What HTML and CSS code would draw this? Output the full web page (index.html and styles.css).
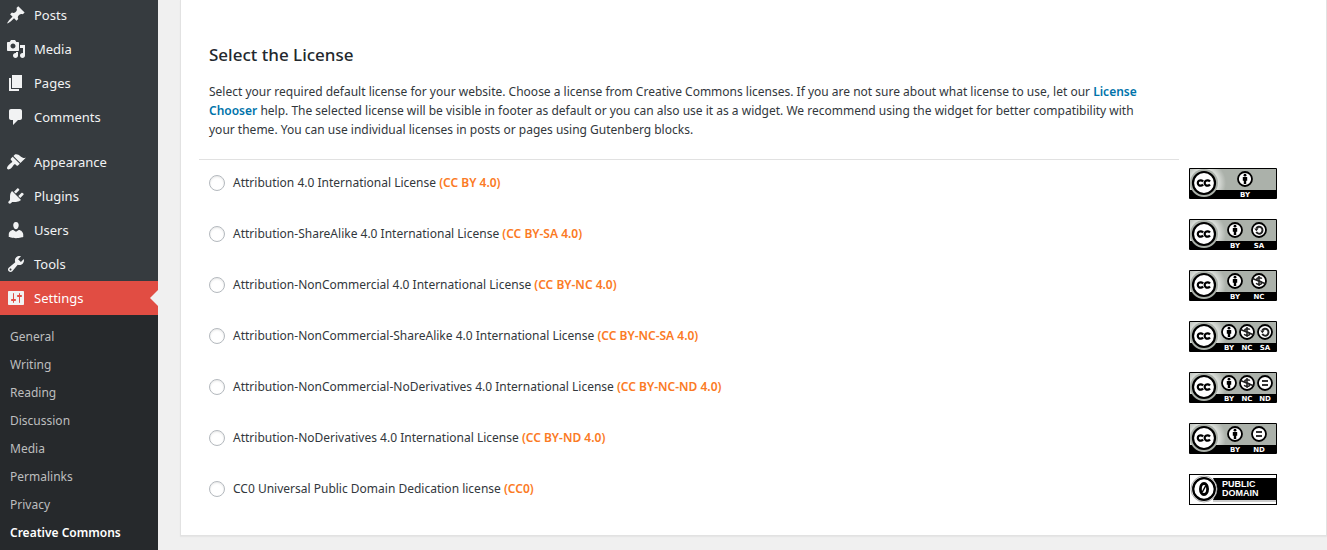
FILE: index.html
```html
<!DOCTYPE html>
<html lang="en">
<head>
<meta charset="utf-8">
<title>Creative Commons Settings</title>
<link rel="stylesheet" href="styles.css">
</head>
<body>
<svg class="sprite" aria-hidden="true">
  <defs>
    <radialGradient id="glow" gradientUnits="userSpaceOnUse" cx="15" cy="15" r="22">
      <stop offset="0.6" stop-color="#e2e5e1"/>
      <stop offset="1" stop-color="#abb1aa"/>
    </radialGradient>
    <symbol id="plate" viewBox="0 0 88 31">
      <rect width="88" height="31" rx="1" fill="#000"/>
      <rect x="1" y="1" width="86" height="21" fill="url(#glow)"/>
      <circle cx="15" cy="15" r="14" fill="#abb1aa"/>
      <circle cx="15" cy="15" r="11" fill="#fff" stroke="#000" stroke-width="2.2"/>
      <g fill="none" stroke="#000" stroke-width="2.2">
        <path d="M14.100 13.500A2.900 2.700 0 1 0 14.100 16.500M21 13.500A2.900 2.700 0 1 0 21 16.500"/>
      </g>
    </symbol>
    <symbol id="by" viewBox="0 0 16 16">
      <circle cx="8" cy="8" r="7" fill="#fff" stroke="#000" stroke-width="1.8"/>
      <circle cx="8" cy="4.200" r="1.400"/>
      <path d="M5.800 6h4.400v3.800H9.200V13H6.800V9.800H5.800z"/>
    </symbol>
    <symbol id="sa" viewBox="0 0 16 16">
      <circle cx="8" cy="8" r="7" fill="#fff" stroke="#000" stroke-width="1.8"/>
      <path d="M5.300 6.500A3.300 3.500 0 1 1 5.300 9.900" fill="none" stroke="#222" stroke-width="2"/>
      <path d="M3.200 6.600h4.400L5.400 9.200z" fill="#222"/>
    </symbol>
    <symbol id="nc" viewBox="0 0 16 16">
      <circle cx="8" cy="8" r="7" fill="#fff" stroke="#000" stroke-width="1.8"/>
      <path d="M10.800 5.700C9.900 4.200 5.700 4.200 5.700 6.300c0 1.900 5 1.500 5 3.500 0 2.200-4.600 2-5.500.3M8 3v10" fill="none" stroke="#222" stroke-width="1.500"/>
      <path d="M1.500 5.500l13 5.200" stroke="#222" stroke-width="1.600"/>
    </symbol>
    <symbol id="nd" viewBox="0 0 16 16">
      <circle cx="8" cy="8" r="7" fill="#fff" stroke="#000" stroke-width="1.8"/>
      <path d="M5 5h6v2H5zM5 9h6v2H5z" fill="#333"/>
    </symbol>
  </defs>
</svg>

<div class="layout">
  <nav class="sidebar" aria-label="Main menu">
    <ul class="menu">
      <li><a class="menu-link" href="#"><svg class="menu-icon" viewBox="0 0 20 20"><path d="M10.440 3.020l1.820-1.820 6.360 6.350-1.830 1.820c-1.050-.68-2.480-.57-3.410.36l-.75.75c-.92.93-1.040 2.350-.35 3.410l-1.830 1.820-2.410-2.410-2.800 2.790c-.42.42-3.380 2.710-3.800 2.290s1.860-3.390 2.280-3.810l2.790-2.790L4.100 9.360l1.830-1.820c1.050.69 2.480.57 3.400-.36l.75-.75c.93-.92 1.050-2.350.36-3.410z"/></svg>Posts</a></li>
      <li><a class="menu-link" href="#"><svg class="menu-icon" viewBox="0 0 20 20"><path d="M13 11V4c0-.55-.45-1-1-1h-1.670L9 1H5L3.670 3H2c-.55 0-1 .45-1 1v7c0 .55.45 1 1 1h10c.55 0 1-.45 1-1zM7 4.500c1.380 0 2.500 1.120 2.500 2.500S8.380 9.500 7 9.500 4.500 8.380 4.500 7 5.620 4.500 7 4.500zM14 6h5v10.500c0 1.380-1.120 2.500-2.500 2.500S14 17.880 14 16.500s1.120-2.500 2.500-2.500c.17 0 .34.02.5.05V9h-3V6zm-4 8.050V13h2v3.500c0 1.380-1.120 2.500-2.500 2.500S7 17.880 7 16.500 8.120 14 9.500 14c.17 0 .34.02.5.05z"/></svg>Media</a></li>
      <li><a class="menu-link" href="#"><svg class="menu-icon" viewBox="0 0 20 20"><path d="M6 15V2h10v13H6zm-1 1h8v2H3V5h2v11z"/></svg>Pages</a></li>
      <li><a class="menu-link" href="#"><svg class="menu-icon" viewBox="0 0 20 20"><path d="M5 2h9c1.100 0 2 .9 2 2v7c0 1.100-.9 2-2 2h-2l-5 5v-5H5c-1.100 0-2-.9-2-2V4c0-1.100.9-2 2-2z"/></svg>Comments</a></li>
    </ul>
    <ul class="menu">
      <li><a class="menu-link" href="#"><svg class="menu-icon" viewBox="0 0 20 20"><path d="M14.480 11.060L7.410 3.990l1.500-1.500c.5-.56 2.300-.47 3.510.32 1.210.8 1.430 1.280 2.910 2.100 1.180.64 2.450 1.260 4.450.85zm-.71.71L6.700 4.700 4.930 6.470c-.39.39-.39 1.020 0 1.410l1.060 1.060c.39.39.39 1.030 0 1.420-.6.6-1.430 1.110-2.210 1.690-.35.26-.7.53-1.010.84C1.430 14.230.4 16.080 1.400 17.070c.99 1 2.840-.03 4.180-1.360.31-.31.58-.66.85-1.020.57-.78 1.080-1.610 1.690-2.210.39-.39 1.020-.39 1.410 0l1.060 1.060c.39.39 1.020.39 1.410 0z"/></svg>Appearance</a></li>
      <li><a class="menu-link" href="#"><svg class="menu-icon" viewBox="0 0 20 20"><path d="M13.110 4.360L9.870 7.600 8 5.730l3.240-3.240c.35-.34 1.050-.2 1.560.32.52.51.66 1.210.31 1.550zm-8 1.770l.91-1.120 9.010 9.010-1.190.84c-.71.71-2.630 1.160-3.820 1.160H6.140L4.900 17.260c-.59.59-1.540.59-2.120 0-.59-.58-.59-1.530 0-2.120l1.240-1.240v-3.880c0-1.130.4-3.190 1.090-3.890zm7.260 3.970l3.240-3.240c.34-.35 1.040-.21 1.550.31.52.51.66 1.210.31 1.550l-3.240 3.250z"/></svg>Plugins</a></li>
      <li><a class="menu-link" href="#"><svg class="menu-icon" viewBox="0 0 20 20"><path d="M10 9.250c-2.270 0-2.730-3.440-2.730-3.440C7 4.020 7.820 2 9.970 2c2.160 0 2.980 2.020 2.710 3.810 0 0-.41 3.440-2.680 3.440zm0 2.570L12.720 10c2.390 0 4.520 2.330 4.520 4.530v2.490s-3.650 1.130-7.240 1.130c-3.650 0-7.240-1.130-7.240-1.130v-2.490c0-2.250 1.940-4.480 4.470-4.480z"/></svg>Users</a></li>
      <li><a class="menu-link" href="#"><svg class="menu-icon" viewBox="0 0 20 20"><path d="M16.680 9.770c-1.340 1.340-3.300 1.670-4.950.99l-5.410 6.520c-.99.99-2.590.99-3.580 0s-.99-2.590 0-3.570l6.520-5.420c-.68-1.650-.35-3.610.99-4.950 1.280-1.280 3.120-1.620 4.720-1.060l-2.890 2.890 2.820 2.820 2.860-2.870c.53 1.580.18 3.390-1.080 4.650zM3.810 16.210c.4.390 1.040.390 1.430 0 .4-.4.4-1.040 0-1.430-.39-.4-1.030-.4-1.430 0-.39.390-.39 1.030 0 1.430z"/></svg>Tools</a></li>
      <li><a class="menu-link current" href="#"><svg class="menu-icon" viewBox="0 0 20 20"><path d="M18 16V4c0-.55-.45-1-1-1H3c-.55 0-1 .45-1 1v12c0 .55.45 1 1 1h14c.55 0 1-.45 1-1zM8 11h1c.55 0 1 .45 1 1s-.45 1-1 1H8v1.500c0 .28-.22.5-.5.5s-.5-.22-.5-.5V13H6c-.55 0-1-.45-1-1s.45-1 1-1h1V5.500c0-.28.22-.5.5-.5s.5.22.5.5V11zm5-2h-1c-.55 0-1-.45-1-1s.45-1 1-1h1V5.500c0-.28.22-.5.5-.5s.5.22.5.5V7h1c.55 0 1 .45 1 1s-.45 1-1 1h-1v5.500c0 .28-.22.5-.5.5s-.5-.22-.5-.5V9z"/></svg>Settings</a>
        <ul class="submenu">
          <li><a href="#">General</a></li>
          <li><a href="#">Writing</a></li>
          <li><a href="#">Reading</a></li>
          <li><a href="#">Discussion</a></li>
          <li><a href="#">Media</a></li>
          <li><a href="#">Permalinks</a></li>
          <li><a href="#">Privacy</a></li>
          <li><a class="active" href="#" aria-current="page">Creative Commons</a></li>
        </ul>
      </li>
    </ul>
  </nav>

  <main class="content">
    <form class="panel">
      <header class="intro">
        <h2>Select the License</h2>
        <p>Select your required default license for your website. Choose a license from Creative Commons licenses. If you are not sure about what license to use, let our <a href="#">License Chooser</a> help. The selected license will be visible in footer as default or you can also use it as a widget. We recommend using the widget for better compatibility with your theme. You can use individual licenses in posts or pages using Gutenberg blocks.</p>
      </header>
      <ul class="licenses">
        <li class="license">
          <label><input type="radio" name="license"><span>Attribution 4.0 International License <b>(CC BY 4.0)</b></span></label>
          <svg class="badge" viewBox="0 0 88 31"><use href="#plate"/><use href="#by" x="48" y="3" width="16" height="16"/><text x="56" y="29">BY</text></svg>
        </li>
        <li class="license">
          <label><input type="radio" name="license"><span>Attribution-ShareAlike 4.0 International License <b>(CC BY-SA 4.0)</b></span></label>
          <svg class="badge" viewBox="0 0 88 31"><use href="#plate"/><use href="#by" x="38" y="3" width="16" height="16"/><use href="#sa" x="62" y="3" width="16" height="16"/><text x="46" y="29">BY</text><text x="70" y="29">SA</text></svg>
        </li>
        <li class="license">
          <label><input type="radio" name="license"><span>Attribution-NonCommercial 4.0 International License <b>(CC BY-NC 4.0)</b></span></label>
          <svg class="badge" viewBox="0 0 88 31"><use href="#plate"/><use href="#by" x="38" y="3" width="16" height="16"/><use href="#nc" x="62" y="3" width="16" height="16"/><text x="46" y="29">BY</text><text x="70" y="29">NC</text></svg>
        </li>
        <li class="license">
          <label><input type="radio" name="license"><span>Attribution-NonCommercial-ShareAlike 4.0 International License <b>(CC BY-NC-SA 4.0)</b></span></label>
          <svg class="badge" viewBox="0 0 88 31"><use href="#plate"/><use href="#by" x="32" y="3" width="16" height="16"/><use href="#nc" x="50" y="3" width="16" height="16"/><use href="#sa" x="68" y="3" width="16" height="16"/><text x="40" y="29">BY</text><text x="58" y="29">NC</text><text x="76" y="29">SA</text></svg>
        </li>
        <li class="license">
          <label><input type="radio" name="license"><span>Attribution-NonCommercial-NoDerivatives 4.0 International License <b>(CC BY-NC-ND 4.0)</b></span></label>
          <svg class="badge" viewBox="0 0 88 31"><use href="#plate"/><use href="#by" x="32" y="3" width="16" height="16"/><use href="#nc" x="50" y="3" width="16" height="16"/><use href="#nd" x="68" y="3" width="16" height="16"/><text x="40" y="29">BY</text><text x="58" y="29">NC</text><text x="76" y="29">ND</text></svg>
        </li>
        <li class="license">
          <label><input type="radio" name="license"><span>Attribution-NoDerivatives 4.0 International License <b>(CC BY-ND 4.0)</b></span></label>
          <svg class="badge" viewBox="0 0 88 31"><use href="#plate"/><use href="#by" x="38" y="3" width="16" height="16"/><use href="#nd" x="62" y="3" width="16" height="16"/><text x="46" y="29">BY</text><text x="70" y="29">ND</text></svg>
        </li>
        <li class="license">
          <label><input type="radio" name="license"><span>CC0 Universal Public Domain Dedication license <b>(CC0)</b></span></label>
          <svg class="badge" viewBox="0 0 88 31">
            <rect x="0.500" y="0.500" width="87" height="30" fill="#fff" stroke="#000"/>
            <path d="M24 4h63v22H24q6-11 0-22z"/>
            <path d="M24 27h63" stroke="#999"/>
            <circle cx="15" cy="15" r="13" fill="#fff" stroke="#999" stroke-width="0.800"/>
            <circle cx="15" cy="15" r="10.800" fill="#fff" stroke="#000" stroke-width="2.300"/>
            <ellipse cx="15" cy="15" rx="3.600" ry="5.500" fill="none" stroke="#000" stroke-width="2.800"/>
            <path d="M13.300 18l3.600-6.500" stroke="#000" stroke-width="1.500"/>
            <text class="wide" x="33" y="13">PUBLIC</text><text class="wide" x="33" y="22">DOMAIN</text>
          </svg>
        </li>
      </ul>
    </form>
  </main>
</div>
</body>
</html>
```
FILE: styles.css
```css
* {
  box-sizing: border-box;
}

body {
  margin: 0;
  background: #f0f0f0;
  color: #32373c;
  font: 12px/19px "Segoe UI", "Noto Sans", "Open Sans", sans-serif;
}

ul {
  margin: 0;
  padding: 0;
  list-style: none;
}

a {
  text-decoration: none;
}

.sprite {
  position: absolute;
  width: 0;
  height: 0;
}

.layout {
  display: flex;
  min-height: 100vh;
}

.sidebar {
  display: flex;
  flex: none;
  flex-direction: column;
  gap: 11px;
  width: 158px;
  max-height: 100vh;
  margin-top: -2px;
  background: #363b3f;
}

.menu-link {
  display: flex;
  align-items: center;
  gap: 8px;
  height: 34px;
  padding-left: 6px;
  color: #f1f2f3;
  font-size: 13px;
}

.menu-icon {
  width: 20px;
  height: 20px;
  fill: #f1f2f3;
}

.current {
  position: relative;
  background: #e14d43;
  color: #fff;
}

.current::after {
  position: absolute;
  top: 9px;
  right: 0;
  border: 8px solid transparent;
  border-right-color: #f0f0f0;
  border-left: 0;
  content: "";
}

.submenu {
  padding: 8px 0;
  background: #26292c;
}

.submenu a {
  display: block;
  padding: 0 10px;
  color: #bdbebf;
  line-height: 28px;
}

.submenu .active {
  color: #fff;
  font-weight: 600;
}

.content {
  flex: 1;
  padding-left: 22px;
}

.panel {
  padding: 45px 49px 30px 18px;
  border: 1px solid #e2e2e2;
  border-top: 0;
  background: #fff;
  box-shadow: 0 1px 1px #e6e6e6;
}

.intro {
  margin-right: 98px;
  padding: 0 20px 20px 10px;
  border-bottom: 1px solid #e1e1e1;
}

h2 {
  margin: 0 0 17px;
  color: #23282d;
  font-size: 17px;
  font-weight: 500;
  line-height: 20px;
}

p {
  margin: 0;
}

p a {
  color: #0073aa;
  font-weight: 600;
}

.licenses {
  display: grid;
  gap: 20px;
  padding: 8px 0 0 10px;
}

.license {
  display: flex;
  align-items: center;
  justify-content: space-between;
}

.license label {
  display: flex;
  align-items: center;
  gap: 8px;
  padding-bottom: 2px;
}

.license b {
  color: #fb7a24;
  font-weight: 600;
}

.license input {
  width: 16px;
  height: 16px;
  margin: 0;
  border: 1px solid #b4b9be;
  border-radius: 50%;
  background: #fff;
  box-shadow: inset 0 1px 2px rgba(0, 0, 0, 0.1);
  appearance: none;
}

.license input:checked {
  border: 5px solid #0073aa;
}

.badge {
  flex: none;
  width: 88px;
  height: 31px;
}

.badge text {
  fill: #fff;
  font: bold 7px "DejaVu Sans", sans-serif;
  text-anchor: middle;
}

.badge .wide {
  font: bold 9px "Liberation Sans", sans-serif;
  text-anchor: start;
}
```
